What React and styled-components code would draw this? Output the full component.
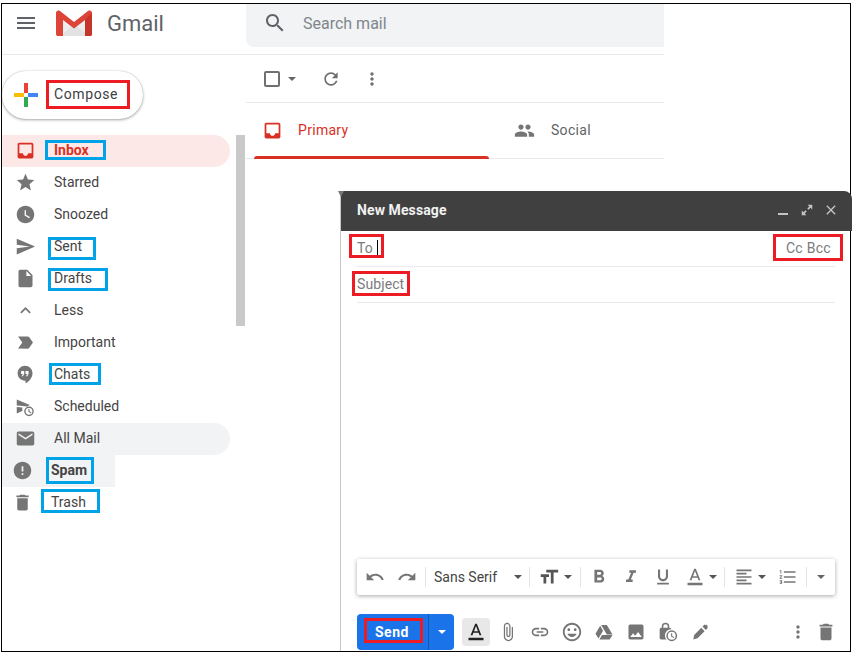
import React from "react"
import styled, { createGlobalStyle } from "styled-components"

const P = {
  menu: "M3 18h18v-2H3v2zm0-5h18v-2H3v2zm0-7v2h18V6H3z",
  inbox: "M19 3H4.99c-1.11 0-1.98.89-1.98 2L3 19c0 1.1.88 2 1.99 2H19c1.1 0 2-.9 2-2V5c0-1.11-.9-2-2-2zm0 12h-4c0 1.66-1.35 3-3 3s-3-1.34-3-3H4.99V5H19v10z",
  star: "M12 17.27L18.18 21l-1.64-7.03L22 9.24l-7.19-.61L12 2 9.19 8.63 2 9.24l5.46 4.73L5.82 21z",
  clock: "M11.99 2C6.47 2 2 6.48 2 12s4.47 10 9.99 10C17.52 22 22 17.52 22 12S17.52 2 11.99 2zm4.25 14.3L11 13.2V7h1.5v5.3l4.5 2.67-.76 1.33z",
  send: "M2.01 21L23 12 2.01 3 2 10l15 2-15 2z",
  draft: "M6 2c-1.1 0-1.99.9-1.99 2L4 20c0 1.1.89 2 1.99 2H18c1.1 0 2-.9 2-2V8l-6-6H6zm7 7V3.5L18.5 9H13z",
  less: "M12 8l-6 6 1.41 1.41L12 10.83l4.59 4.58L18 14z",
  label: "M3.5 18.99l11 .01c.67 0 1.27-.33 1.63-.84L20.5 12l-4.37-6.16c-.36-.51-.96-.84-1.63-.84l-11 .01L8.34 12 3.5 18.99z",
  chat: "M11.5 2C6.81 2 3 5.81 3 10.5S6.81 19 11.5 19h.5v3c4.86-2.34 8-7 8-11.5C20 5.81 16.19 2 11.5 2zm-1 9.5L9 14H7.5l1.5-2.5H7V8h3.5v3.5zm5 0L14 14h-1.5l1.5-2.5h-2V8h3.5v3.5z",
  schedule: "M2 4l15 6.4-3.4 1.500L6 11l-4-.2V4zm0 8.700l6.400.3c-.3 1.300-.2 2.600.3 3.800L2 20v-7.300zM16 12a5.500 5.500 0 1 0 0 11 5.500 5.500 0 0 0 0-11zm0 1.600a3.900 3.900 0 1 1 0 7.800 3.900 3.900 0 0 1 0-7.800zm-.7 1.200v3.300l2.700 1.500.6-1-2.100-1.200v-2.600h-1.200z",
  mail: "M20 4H4c-1.1 0-1.99.9-1.99 2L2 18c0 1.1.9 2 2 2h16c1.1 0 2-.9 2-2V6c0-1.1-.9-2-2-2zm0 4l-8 5-8-5V6l8 5 8-5v2z",
  error: "M12 2C6.48 2 2 6.48 2 12s4.48 10 10 10 10-4.48 10-10S17.52 2 12 2zm1 15h-2v-2h2v2zm0-4h-2V7h2v6z",
  trash: "M6 19c0 1.1.9 2 2 2h8c1.1 0 2-.9 2-2V7H6v12zM19 4h-3.5l-1-1h-5l-1 1H5v2h14V4z",
  search: "M15.5 14h-.79l-.28-.27C15.41 12.59 16 11.11 16 9.5 16 5.91 13.09 3 9.5 3S3 5.91 3 9.5 5.91 16 9.5 16c1.61 0 3.09-.59 4.23-1.57l.27.28v.79l5 4.99L20.49 19l-4.99-5zm-6 0C7.01 14 5 11.99 5 9.5S7.01 5 9.5 5 14 7.01 14 9.5 11.99 14 9.5 14z",
  refresh: "M17.65 6.35C16.2 4.9 14.21 4 12 4c-4.42 0-7.99 3.58-7.99 8s3.57 8 7.99 8c3.73 0 6.84-2.55 7.73-6h-2.08c-.82 2.33-3.04 4-5.65 4-3.31 0-6-2.69-6-6s2.69-6 6-6c1.66 0 3.14.69 4.22 1.78L13 11h7V4l-2.35 2.35z",
  more: "M12 8c1.1 0 2-.9 2-2s-.9-2-2-2-2 .9-2 2 .9 2 2 2zm0 2c-1.1 0-2 .9-2 2s.9 2 2 2 2-.9 2-2-.9-2-2-2zm0 6c-1.1 0-2 .9-2 2s.9 2 2 2 2-.9 2-2-.9-2-2-2z",
  people: "M16 11c1.66 0 2.99-1.34 2.99-3S17.66 5 16 5c-1.66 0-3 1.34-3 3s1.34 3 3 3zm-8 0c1.66 0 2.99-1.34 2.99-3S9.66 5 8 5C6.34 5 5 6.34 5 8s1.34 3 3 3zm0 2c-2.33 0-7 1.17-7 3.5V19h14v-2.5c0-2.33-4.67-3.5-7-3.5zm8 0c-.29 0-.62.02-.97.05 1.16.84 1.97 1.97 1.97 3.45V19h6v-2.5c0-2.33-4.67-3.5-7-3.5z",
  undo: "M12.5 8c-2.65 0-5.05.99-6.9 2.6L2 7v9h9l-3.62-3.62c1.39-1.16 3.16-1.88 5.12-1.88 3.54 0 6.55 2.31 7.6 5.5l2.37-.78C21.08 11.03 17.15 8 12.5 8z",
  redo: "M18.4 10.6C16.55 8.99 14.15 8 11.5 8c-4.65 0-8.58 3.03-9.96 7.22L3.9 16c1.05-3.19 4.05-5.5 7.6-5.5 1.95 0 3.73.72 5.12 1.88L13 16h9V7l-3.6 3.6z",
  size: "M9 4v3h5v12h3V7h5V4H9zm-6 8h3v7h3v-7h3V9H3v3z",
  bold: "M15.6 10.79c.97-.67 1.65-1.77 1.65-2.79 0-2.26-1.75-4-4-4H7v14h7.04c2.09 0 3.71-1.7 3.71-3.79 0-1.52-.86-2.82-2.15-3.42zM10 6.5h3c.83 0 1.5.67 1.5 1.5s-.67 1.5-1.5 1.5h-3v-3zm3.5 9H10v-3h3.5c.83 0 1.5.67 1.5 1.5s-.67 1.5-1.5 1.5z",
  italic: "M10 4v3h2.21l-3.42 8H6v3h8v-3h-2.21l3.42-8H18V4z",
  underline: "M12 17c3.31 0 6-2.69 6-6V3h-2.5v8c0 1.93-1.57 3.5-3.5 3.5S8.5 12.93 8.5 11V3H6v8c0 3.31 2.69 6 6 6zm-7 2v2h14v-2H5z",
  color: "M11 2L5.5 16h2.25l1.12-3h6.25l1.12 3h2.25L13 2h-2zm-1.38 9L12 4.67 14.38 11H9.62zM3 19h18v3H3z",
  align: "M15 15H3v2h12v-2zm0-8H3v2h12V7zM3 13h18v-2H3v2zm0 8h18v-2H3v2zM3 3v2h18V3H3z",
  list: "M2 17h2v.5H3v1h1v.5H2v1h3v-4H2v1zm1-9h1V4H2v1h1v3zm-1 3h1.8L2 13.1v.9h3v-1H3.2L5 10.9V10H2v1zm5-6v2h14V5H7zm0 14h14v-2H7v2zm0-6h14v-2H7v2z",
  attach: "M16.5 6v11.5c0 2.21-1.79 4-4 4s-4-1.79-4-4V5c0-1.38 1.12-2.5 2.5-2.5s2.5 1.12 2.5 2.5v10.5c0 .55-.45 1-1 1s-1-.45-1-1V6H10v9.5c0 1.38 1.12 2.5 2.5 2.5s2.5-1.12 2.5-2.5V5c0-2.21-1.79-4-4-4S7 2.79 7 5v12.5c0 3.04 2.46 5.5 5.5 5.5s5.5-2.46 5.5-5.5V6h-1.5z",
  link: "M3.9 12c0-1.71 1.39-3.1 3.1-3.1h4V7H7c-2.76 0-5 2.24-5 5s2.24 5 5 5h4v-1.9H7c-1.71 0-3.1-1.39-3.1-3.1zM8 13h8v-2H8v2zm9-6h-4v1.9h4c1.71 0 3.1 1.39 3.1 3.1s-1.39 3.1-3.1 3.1h-4V17h4c2.76 0 5-2.24 5-5s-2.24-5-5-5z",
  emoji: "M11.99 2C6.47 2 2 6.48 2 12s4.47 10 9.99 10C17.52 22 22 17.52 22 12S17.52 2 11.99 2zM12 20c-4.42 0-8-3.58-8-8s3.58-8 8-8 8 3.58 8 8-3.58 8-8 8zm3.5-9c.83 0 1.5-.67 1.5-1.5S16.33 8 15.5 8 14 8.67 14 9.5s.67 1.5 1.5 1.5zm-7 0c.83 0 1.5-.67 1.5-1.5S9.33 8 8.5 8 7 8.67 7 9.5 7.67 11 8.5 11zm3.5 6.5c2.33 0 4.31-1.46 5.11-3.5H6.89c.8 2.04 2.78 3.5 5.11 3.5z",
  drive: "M8.6 3.5h6.8l6.8 11.6h-6.8L8.6 3.5zM7.4 4.6l3.4 5.8-5.4 9.4-3.6-5.8 5.6-9.4zM9.6 15.6h12.6l-3.4 5.4H6.5l3.1-5.4z",
  image: "M21 19V5c0-1.1-.9-2-2-2H5c-1.1 0-2 .9-2 2v14c0 1.1.9 2 2 2h14c1.1 0 2-.9 2-2zM8.5 13.5l2.5 3.01L14.5 12l4.5 6H5l3.5-4.5z",
  confidential: "M9 1a4.5 4.5 0 0 0-4.5 4.5V7H4c-1.1 0-2 .9-2 2v10c0 1.1.9 2 2 2h6.2A7.5 7.5 0 0 1 16 8.6V9c0-1.1-.9-2-2-2h-.5V5.500A4.500 4.500 0 0 0 9 1zm0 1.800a2.700 2.700 0 0 1 2.700 2.700V7H6.300V5.500A2.700 2.700 0 0 1 9 2.800zM16.500 10a6.500 6.500 0 1 0 0 13 6.500 6.500 0 0 0 0-13zm0 1.800a4.700 4.700 0 1 1 0 9.400 4.700 4.700 0 0 1 0-9.400zm-.8 1.700v3.900l3.200 1.900.7-1.100-2.600-1.500v-3.200h-1.300z",
  pen: "M4 21l1-5.500 8.500-8.500 4 4-8.500 8.500L4 21zM15 5.500l2.500-2.500 1 1 1-1 2 2-1 1 1 1-2.500 2.500-4-4z",
  expand: "M13 3h8v8l-3-3-3.500 3.500-2-2L16 6l-3-3zM11 21H3v-8l3 3 3.500-3.500 2 2L8 18l3 3z",
  close: "M19 6.410L17.590 5 12 10.590 6.410 5 5 6.410 10.590 12 5 17.590 6.410 19 12 13.410 17.590 19 19 17.590 13.410 12z",
}

const navItems = [
  { name: "Inbox", icon: "inbox", active: true, mark: { t: 0, l: -9, w: 61, h: 20 } },
  { name: "Starred", icon: "star" },
  { name: "Snoozed", icon: "clock" },
  { name: "Sent", icon: "send", mark: { t: 1, l: -6, w: 48, h: 23 } },
  { name: "Drafts", icon: "draft", mark: { t: 0, l: -6, w: 60, h: 23 } },
  { name: "Less", icon: "less" },
  { name: "Important", icon: "label" },
  { name: "Chats", icon: "chat", mark: { t: -1, l: -5, w: 52, h: 22 } },
  { name: "Scheduled", icon: "schedule" },
  { name: "All Mail", icon: "mail", tint: true },
  { name: "Spam", icon: "error", square: true, strong: true, tight: true, mark: { t: -3, l: -5, w: 48, h: 27 } },
  { name: "Trash", icon: "trash", tight: true, mark: { t: -3, l: -10, w: 59, h: 24 } },
]

const actionIcons = [
  { name: "attach", size: 20 },
  { name: "link", size: 20 },
  { name: "emoji", size: 22 },
  { name: "drive", size: 20 },
  { name: "image", size: 20 },
  { name: "confidential", size: 20 },
  { name: "pen", size: 20 },
]

function Icon({ name, size = 20, color = "#757575" }) {
  return (
    <svg width={size} height={size} viewBox="0 0 24 24" fill={color} style={{ flexShrink: 0, display: "block" }}>
      <path d={P[name]} fillRule="evenodd" />
    </svg>
  )
}

function GmailLogo() {
  return (
    <svg width="36" height="27" viewBox="0 0 36 27" style={{ display: "block" }}>
      <path d="M3 1 L18 13 L33 1 L33 26 L3 26 Z" fill="#eeeeee" />
      <path d="M5 26 L18 14 L33 26 Z" fill="#e2e2e2" />
      <path d="M0 3 C0 1 2 0 4 1 L18 12 L32 1 C34 0 36 1 36 3 L36 24 C36 25.500 35 26 34 26 L29 26 L29 10 L18 18.500 L7 10 L7 26 L2 26 C1 26 0 25.500 0 24 Z" fill="#db4437" />
      <path d="M29 10 L36 3 L36 24 C36 25.500 35 26 34 26 L29 26 Z" fill="#c5352a" />
    </svg>
  )
}

function PlusIcon() {
  return (
    <svg width="24" height="24" viewBox="0 0 24 24" style={{ display: "block", flexShrink: 0 }}>
      <path d="M10 0h4v10h-4z" fill="#ea4335" />
      <path d="M14 10h10v4H14z" fill="#4285f4" />
      <path d="M10 14h4v10h-4z" fill="#34a853" />
      <path d="M0 10h10v4H0z" fill="#fbbc04" />
    </svg>
  )
}

export default function App() {
  return (
    <>
      <GlobalStyle />
      <Frame>
        <TopBar>
          <Brand>
            <Icon name="menu" size={24} color="#5f6368" />
            <GmailLogo />
            <BrandName>Gmail</BrandName>
          </Brand>
          <SearchBox>
            <Icon name="search" size={24} color="#5f6368" />
            <SearchText>Search mail</SearchText>
          </SearchBox>
        </TopBar>

        <Body>
          <Sidebar>
            <ComposeButton>
              <PlusIcon />
              <RaisedLabel>
                Compose
                <Mark $color="#ed1c24" $t={-4} $l={-8} $w={84} $h={29} />
              </RaisedLabel>
            </ComposeButton>
            <NavList>
              {navItems.map(item => (
                <NavRow key={item.name} $active={item.active} $tint={item.tint} $square={item.square} $tight={item.tight}>
                  <Icon name={item.icon} size={21} color={item.active ? "#d93025" : "#757575"} />
                  <Labelled $strong={item.active || item.strong}>
                    {item.name}
                    {item.mark && <Mark $color="#00a2e8" $t={item.mark.t} $l={item.mark.l} $w={item.mark.w} $h={item.mark.h} />}
                  </Labelled>
                </NavRow>
              ))}
            </NavList>
            <ScrollThumb />
          </Sidebar>

          <Main>
            <Toolbar>
              <Checkbox />
              <Caret $color="#666" />
              <ToolButton $gap={25}><Icon name="refresh" size={20} color="#6f6f6f" /></ToolButton>
              <ToolButton $gap={21}><Icon name="more" size={20} color="#6f6f6f" /></ToolButton>
            </Toolbar>
            <Tabs>
              <Tab $active>
                <Icon name="inbox" size={21} color="#d93025" />
                Primary
              </Tab>
              <Tab>
                <Icon name="people" size={21} color="#757575" />
                Social
              </Tab>
            </Tabs>
          </Main>
        </Body>

        <ComposeWindow>
          <ComposeHeader>
            <ComposeTitle>New Message</ComposeTitle>
            <WindowControls>
              <MinimizeBar />
              <Icon name="expand" size={14} color="#c4c4c4" />
              <Icon name="close" size={16} color="#c4c4c4" />
            </WindowControls>
          </ComposeHeader>

          <FieldRow>
            <RaisedLabel>
              To
              <Mark $color="#ed1c24" $t={-4} $l={-8} $w={35} $h={24} />
            </RaisedLabel>
            <Cursor />
            <CopyLinks>
              <RaisedLabel>
                Cc Bcc
                <Mark $color="#ed1c24" $t={-4} $l={-13} $w={70} $h={27} />
              </RaisedLabel>
            </CopyLinks>
          </FieldRow>
          <FieldRow>
            <RaisedLabel>
              Subject
              <Mark $color="#ed1c24" $t={-3} $l={-5} $w={58} $h={25} />
            </RaisedLabel>
          </FieldRow>

          <FormatBar>
            <FormatIcon $w={32}><Icon name="undo" size={20} /></FormatIcon>
            <FormatIcon $w={32}><Icon name="redo" size={20} /></FormatIcon>
            <Separator $l={2} $r={8} />
            <FontName>Sans Serif</FontName>
            <Caret $color="#555" />
            <Separator $l={7} $r={7} />
            <FormatIcon $w={24}><Icon name="size" size={22} color="#555" /></FormatIcon>
            <Caret $color="#555" $l={3} />
            <Separator $l={8} $r={2} />
            <FormatIcon $w={32}><Icon name="bold" size={22} /></FormatIcon>
            <FormatIcon $w={32}><Icon name="italic" size={20} /></FormatIcon>
            <FormatIcon $w={32}><Icon name="underline" size={20} /></FormatIcon>
            <FormatIcon $w={32}><Icon name="color" size={20} /></FormatIcon>
            <Caret $color="#555" $l={-2} />
            <Separator $l={7} $r={7} />
            <FormatIcon $w={24}><Icon name="align" size={20} /></FormatIcon>
            <Caret $color="#555" $l={2} />
            <FormatIcon $w={32} $l={6}><Icon name="list" size={20} /></FormatIcon>
            <Separator $l={2} $r={10} />
            <Caret $color="#666" />
          </FormatBar>

          <ActionBar>
            <SendButton>
              <SendLabel>
                <Labelled>
                  Send
                  <Mark $color="#ed1c24" $t={-4} $l={-11} $w={59} $h={25} />
                </Labelled>
              </SendLabel>
              <SendMenu><Caret $color="#fff" /></SendMenu>
            </SendButton>
            <ColorToggle><Icon name="color" size={20} color="#222" /></ColorToggle>
            <ActionIcons>
              {actionIcons.map(a => (
                <ActionSlot key={a.name}><Icon name={a.name} size={a.size} /></ActionSlot>
              ))}
            </ActionIcons>
            <ActionEnd>
              <Icon name="more" size={20} />
              <Icon name="trash" size={22} />
            </ActionEnd>
          </ActionBar>
        </ComposeWindow>
      </Frame>
    </>
  )
}

const GlobalStyle = createGlobalStyle`
  * { box-sizing: border-box; }
  html, body { margin: 0; padding: 0; background: #fff; }
  body { font-family: Roboto, "Liberation Sans", sans-serif; overflow: hidden; }
`

const Frame = styled.div`
  position: relative;
  width: 850px;
  height: 649px;
  margin: 3px 0 0 1px;
  border: 1px solid #000;
  background: #fff;
`

const TopBar = styled.header`
  display: flex;
  width: 662px;
  height: 51px;
  border-bottom: 1px solid #e8eaed;
`

const Brand = styled.div`
  display: flex;
  align-items: center;
  width: 244px;
  padding: 0 0 12px 12px;
  gap: 18px;
`

const BrandName = styled.span`
  margin-left: -3px;
  font-size: 22px;
  color: #5f6368;
`

const SearchBox = styled.div`
  flex: 1;
  display: flex;
  align-items: center;
  height: 43px;
  gap: 16px;
  padding: 0 0 5px 17px;
  background: #f1f3f4;
  border-bottom-left-radius: 8px;
`

const SearchText = styled.span`
  font-size: 16px;
  color: #80868b;
`

const Body = styled.div`
  display: flex;
`

const Sidebar = styled.nav`
  position: relative;
  width: 244px;
  height: 590px;
  padding-top: 16px;
`

const ComposeButton = styled.div`
  display: flex;
  align-items: center;
  gap: 16px;
  width: 141px;
  height: 48px;
  padding-left: 12px;
  background: #fff;
  border-radius: 24px;
  font-size: 14px;
  letter-spacing: .6px;
  color: #3c4043;
  box-shadow: 0 1px 3px rgba(60, 64, 67, .45), 0 0 1px rgba(60, 64, 67, .3);
`

const NavList = styled.div`
  margin-top: 16px;
  width: 228px;
`

const NavRow = styled.div`
  display: flex;
  align-items: center;
  height: 32px;
  padding: 0 0 2px ${p => (p.$tight ? "10px" : "13px")};
  gap: 18px;
  font-size: 14px;
  color: ${p => (p.$active ? "#d93025" : "#444")};
  background: ${p => (p.$active ? "#fce8e6" : p.$tint || p.$square ? "#f1f3f4" : "transparent")};
  width: ${p => (p.$square ? "113px" : "228px")};
  border-radius: ${p => (p.$active || p.$tint ? "0 16px 16px 0" : "0")};
`

const Labelled = styled.span`
  position: relative;
  display: inline-block;
  line-height: 20px;
  font-weight: ${p => (p.$strong ? 700 : "inherit")};
`

const RaisedLabel = styled(Labelled)`
  top: -1px;
`

const Mark = styled.i`
  position: absolute;
  top: ${p => p.$t}px;
  left: ${p => p.$l}px;
  width: ${p => p.$w}px;
  height: ${p => p.$h}px;
  border: 3px solid ${p => p.$color};
  pointer-events: none;
`

const ScrollThumb = styled.div`
  position: absolute;
  top: 80px;
  right: 1px;
  width: 9px;
  height: 191px;
  background: #c9c9c9;
`

const Main = styled.main`
  width: 418px;
`

const Toolbar = styled.div`
  display: flex;
  align-items: center;
  height: 48px;
  padding-left: 18px;
  border-bottom: 1px solid #e8eaed;
`

const Checkbox = styled.span`
  width: 16px;
  height: 16px;
  margin-right: 8px;
  border: 2px solid #6f6f6f;
  border-radius: 2px;
`

const Caret = styled.span`
  width: 0;
  height: 0;
  flex-shrink: 0;
  margin-left: ${p => p.$l || 0}px;
  border-left: 4.500px solid transparent;
  border-right: 4.500px solid transparent;
  border-top: 4.500px solid ${p => p.$color};
`

const ToolButton = styled.span`
  margin-left: ${p => p.$gap}px;
`

const Tabs = styled.div`
  display: flex;
  height: 56px;
  padding-left: 8px;
  border-bottom: 1px solid #e8eaed;
`

const Tab = styled.div`
  position: relative;
  display: flex;
  align-items: center;
  gap: ${p => (p.$active ? "15px" : "16px")};
  width: ${p => (p.$active ? "235px" : "175px")};
  height: 55px;
  padding: 0 0 1px ${p => (p.$active ? "8px" : "25px")};
  font-size: 14px;
  letter-spacing: .3px;
  color: ${p => (p.$active ? "#d93025" : "#5f6368")};
  &::after {
    content: "";
    display: ${p => (p.$active ? "block" : "none")};
    position: absolute;
    left: 0;
    right: 0;
    bottom: -1px;
    height: 3px;
    background: #d93025;
    border-radius: 3px 3px 0 0;
  }
`

const ComposeWindow = styled.section`
  position: absolute;
  top: 187px;
  left: 338px;
  right: 0;
  bottom: 0;
  display: flex;
  flex-direction: column;
  background: #fff;
  border-left: 1px solid #c8c8c8;
  &::before {
    content: "";
    position: absolute;
    top: 0;
    left: -3px;
    border-top: 6px solid #777;
    border-left: 3px solid transparent;
    border-right: 3px solid transparent;
  }
`

const ComposeHeader = styled.div`
  display: flex;
  align-items: center;
  justify-content: space-between;
  height: 40px;
  flex-shrink: 0;
  margin-right: -2px;
  padding: 0 13px 2px 16px;
  background: #404040;
  border-radius: 0 8px 0 0;
`

const ComposeTitle = styled.span`
  font-size: 14px;
  font-weight: 700;
  letter-spacing: .1px;
  color: #f1f1f1;
`

const WindowControls = styled.div`
  display: flex;
  align-items: center;
  gap: 9px;
`

const MinimizeBar = styled.span`
  width: 10px;
  height: 2px;
  margin: 8px 3px 0 0;
  background: #c4c4c4;
`

const FieldRow = styled.div`
  display: flex;
  align-items: center;
  height: 36px;
  flex-shrink: 0;
  margin: 0 15px 0 16px;
  font-size: 14px;
  letter-spacing: .1px;
  color: #7b7b7b;
  border-bottom: 1px solid #e8eaed;
`

const Cursor = styled.span`
  width: 1px;
  height: 17px;
  margin-left: 4px;
  background: #000;
`

const CopyLinks = styled.span`
  margin-left: auto;
  padding-right: 4px;
  letter-spacing: .3px;
`

const FormatBar = styled.div`
  display: flex;
  align-items: center;
  height: 36px;
  flex-shrink: 0;
  margin: auto 15px 0 16px;
  padding-left: 2px;
  background: #fff;
  border-radius: 2px;
  box-shadow: 0 1px 4px rgba(0, 0, 0, .35);
`

const FormatIcon = styled.span`
  display: flex;
  justify-content: center;
  width: ${p => p.$w}px;
  margin-left: ${p => p.$l || 0}px;
`

const Separator = styled.span`
  width: 1px;
  height: 20px;
  margin: 0 ${p => p.$r}px 0 ${p => p.$l}px;
  background: #e4e4e4;
`

const FontName = styled.span`
  width: 80px;
  font-size: 14px;
  color: #444;
`

const ActionBar = styled.div`
  display: flex;
  align-items: center;
  height: 36px;
  flex-shrink: 0;
  margin: 19px 13px 1px 16px;
`

const SendButton = styled.div`
  display: flex;
  width: 97px;
  height: 36px;
  background: #1a73e8;
  border-radius: 4px;
  color: #fff;
  font-size: 14px;
  font-weight: 700;
  letter-spacing: .5px;
`

const SendLabel = styled.div`
  display: flex;
  align-items: center;
  width: 72px;
  padding-left: 18px;
  border-right: 1px solid #1558b0;
`

const SendMenu = styled.div`
  flex: 1;
  display: flex;
  align-items: center;
  justify-content: center;
`

const ColorToggle = styled.span`
  display: flex;
  align-items: center;
  justify-content: center;
  width: 28px;
  height: 28px;
  margin-left: 8px;
  background: #e8e8e8;
  border-radius: 4px;
`

const ActionIcons = styled.div`
  display: flex;
  align-items: center;
  margin-left: 2px;
`

const ActionSlot = styled.span`
  display: flex;
  justify-content: center;
  width: 32px;
`

const ActionEnd = styled.div`
  display: flex;
  align-items: center;
  gap: 7px;
  margin-left: auto;
`
